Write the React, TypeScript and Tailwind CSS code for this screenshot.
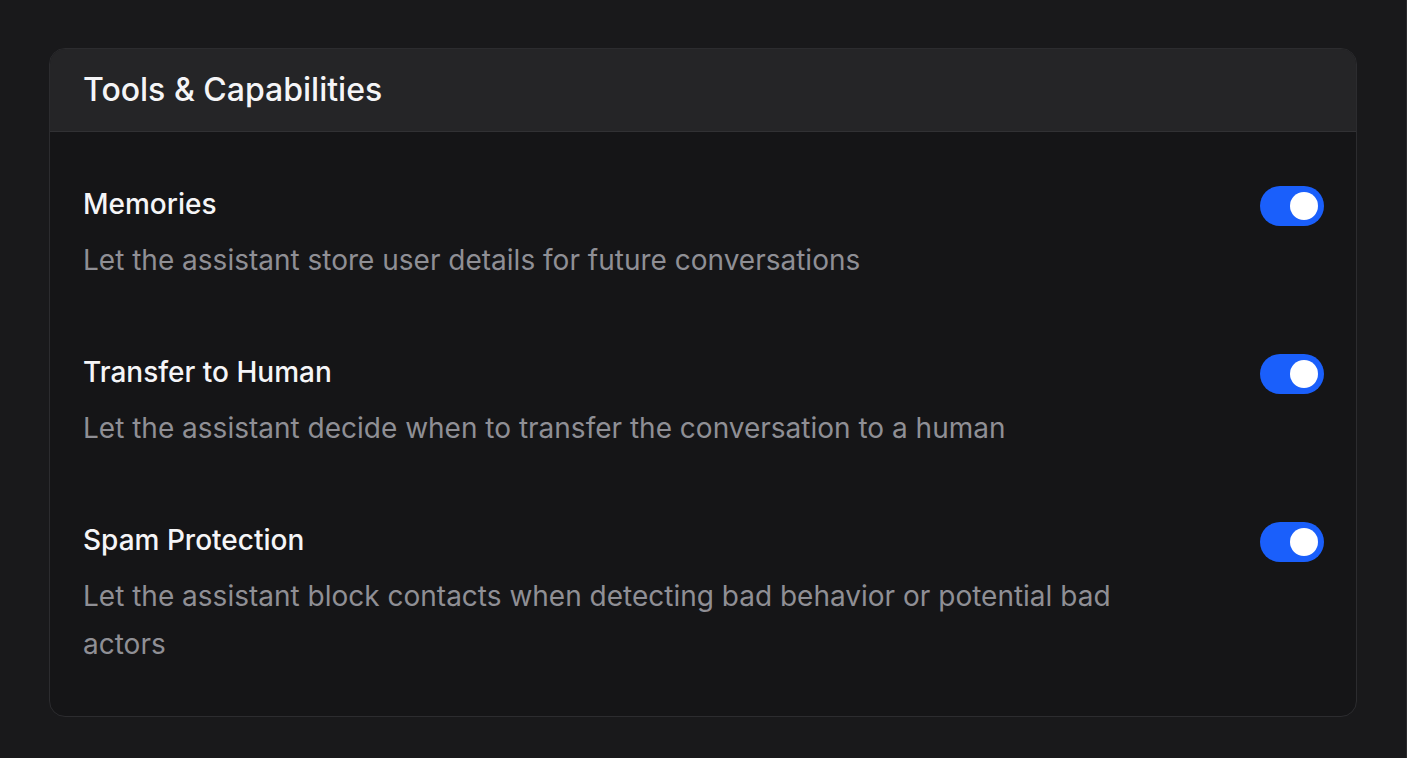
import React from 'react';

const tools = [
  {
    title: 'Memories',
    description: 'Let the assistant store user details for future conversations',
  },
  {
    title: 'Transfer to Human',
    description: 'Let the assistant decide when to transfer the conversation to a human',
  },
  {
    title: 'Spam Protection',
    description:
      'Let the assistant block contacts when detecting bad behavior or potential bad actors',
  },
];

function Toggle() {
  return (
    <button className="flex h-[40px] w-[64px] shrink-0 items-center justify-end rounded-full bg-[#1a5ffb] px-[6px]">
      <span className="block h-[28px] w-[28px] rounded-full bg-white" />
    </button>
  );
}

export default function App() {
  return (
    <div
      className="min-h-[758px] w-[1407px] border-r border-[#2a2a2d] bg-[#19191b] pl-[49px] pr-[49px] pt-[48px]"
      style={{ fontFamily: 'Inter, "Noto Sans", sans-serif' }}
    >
      <div className="overflow-hidden rounded-[16px] border border-[#2c2c2f] bg-[#151517]">
        <div className="flex h-[83px] items-center border-b border-[#313134] bg-[#252527] px-[33px]">
          <h2 className="text-[32px] font-medium leading-none text-[#f5f5f7]">Tools &amp; Capabilities</h2>
        </div>
        <div className="flex flex-col gap-[70px] pb-[48px] pl-[33px] pr-[32px] pt-[54px]">
          {tools.map((t) => (
            <div key={t.title} className="flex items-start justify-between">
              <div className="max-w-[1100px]">
                <div className="text-[28px] font-medium leading-[36px] text-[#f5f5f7]">{t.title}</div>
                <p className="mt-[14px] text-[28px] leading-[48px] text-[#8f8f95]">{t.description}</p>
              </div>
              <Toggle />
            </div>
          ))}
        </div>
      </div>
    </div>
  );
}
